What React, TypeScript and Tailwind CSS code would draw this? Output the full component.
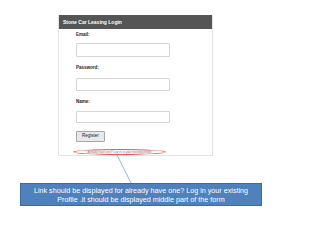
import React from "react";

export default function App() {
  return (
    <div className="relative w-[320px] h-[240px] bg-white overflow-hidden" style={{ fontFamily: '"Liberation Sans", Arial, sans-serif' }}>
      <div className="ml-[58px] pt-[15px] w-[155px]">
        <div className="w-[155px] h-[141px] border-r border-b border-l border-[#e4e4e4] flex flex-col">
          <div className="h-[14px] bg-[#555555] flex items-center pl-[4px] text-white font-bold text-[5px] leading-none">
            Stone Car Leasing Login
          </div>
          <div className="pl-[17px] flex flex-col">
            <div className="mt-[3px] h-[6px] text-[4.5px] leading-[6px] font-bold text-[#222]">Email:</div>
            <div className="mt-[5px] w-[94px] h-[14px] border border-[#d4d4d4] rounded-[1px] bg-white" />
            <div className="mt-[8px] h-[6px] text-[4.5px] leading-[6px] font-bold text-[#222]">Password:</div>
            <div className="mt-[7px] w-[94px] h-[13px] border border-[#d4d4d4] rounded-[1px] bg-white" />
            <div className="mt-[8px] h-[6px] text-[4.5px] leading-[6px] font-bold text-[#222]">Name:</div>
            <div className="mt-[6px] w-[94px] h-[12px] border border-[#d4d4d4] rounded-[1px] bg-white" />
            <div className="mt-[8px] w-[29px] h-[11px] border border-[#a8a8a8] rounded-[1px] bg-[#e8e8e8] flex items-center justify-center text-[4.5px] text-[#222]">
              Register
            </div>
            <div className="mt-[7px] -ml-[3px] w-[93px] h-[6px] border-[0.7px] border-[#e8555a] rounded-[50%] flex items-center justify-center text-[3px] leading-none text-[#777] whitespace-nowrap overflow-hidden">
              Already have one? Log in to your existing profile
            </div>
          </div>
        </div>
      </div>
      <div className="ml-[20px] mt-[27px] w-[242px] h-[23px] bg-[#4f81bd] border border-[#3d6a9f] flex flex-col items-center justify-center text-white text-[7.2px] leading-[9px]">
        <div>Link should be displayed for already have one? Log in your existing</div>
        <div>Profile .it should be displayed middle part of the form</div>
      </div>
      <svg className="absolute left-0 top-0" width="320" height="240">
        <line x1="117" y1="155" x2="131" y2="183" stroke="#7a9fd0" strokeWidth="0.8" />
      </svg>
    </div>
  );
}
